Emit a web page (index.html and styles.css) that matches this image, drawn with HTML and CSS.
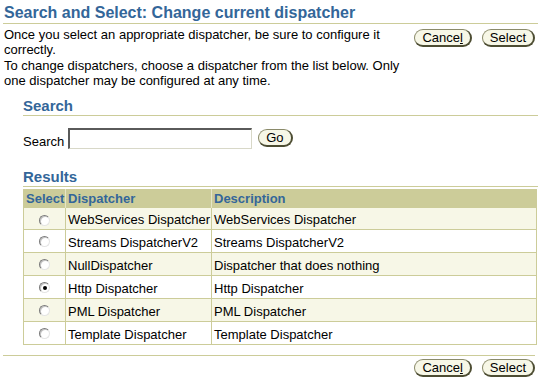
FILE: index.html
```html
<!DOCTYPE html>
<html lang="en">
<head>
<meta charset="utf-8">
<title>Search and Select: Change current dispatcher</title>
<link rel="stylesheet" href="styles.css">
</head>
<body>
<h1 class="page-title">Search and Select: Change current dispatcher</h1>
<div class="intro">
  <p class="intro-text">Once you select an appropriate dispatcher, be sure to configure it correctly.<br>To change dispatchers, choose a dispatcher from the list below. Only one dispatcher may be configured at any time.</p>
  <div class="actions">
    <button class="btn" type="button">Cance<u>l</u></button>
    <button class="btn" type="button">Select</button>
  </div>
</div>
<div class="section">
  <h2 class="section-title">Search</h2>
  <div class="search-row">
    <label class="search-label" for="q">Search</label>
    <input class="search-input" id="q" type="text">
    <button class="btn btn-go" type="button">Go</button>
  </div>
  <h2 class="section-title results-title">Results</h2>
  <table class="results">
    <thead>
      <tr>
        <th class="col-select">Select</th>
        <th class="col-name">Dispatcher</th>
        <th class="col-desc">Description</th>
      </tr>
    </thead>
    <tbody>
      <tr class="odd first"><td class="radio-cell"><span class="radio"></span></td><td>WebServices Dispatcher</td><td>WebServices Dispatcher</td></tr>
      <tr class="even"><td class="radio-cell"><span class="radio"></span></td><td>Streams DispatcherV2</td><td>Streams DispatcherV2</td></tr>
      <tr class="odd"><td class="radio-cell"><span class="radio"></span></td><td>NullDispatcher</td><td>Dispatcher that does nothing</td></tr>
      <tr class="even"><td class="radio-cell"><span class="radio checked"></span></td><td>Http Dispatcher</td><td>Http Dispatcher</td></tr>
      <tr class="odd"><td class="radio-cell"><span class="radio"></span></td><td>PML Dispatcher</td><td>PML Dispatcher</td></tr>
      <tr class="even"><td class="radio-cell"><span class="radio"></span></td><td>Template Dispatcher</td><td>Template Dispatcher</td></tr>
    </tbody>
  </table>
</div>
<div class="footer">
  <button class="btn" type="button">Cance<u>l</u></button>
  <button class="btn" type="button">Select</button>
</div>
</body>
</html>
```
FILE: styles.css
```css
* { box-sizing: border-box; }
html, body { background: #ffffff; }
body {
  margin: 0;
  font-family: "Liberation Sans", Arial, sans-serif;
  font-size: 13px;
  line-height: 15.33px;
  color: #000000;
}
.page-title {
  margin: 0 0 0 3px;
  padding: 3px 0 0 1px;
  font-size: 16px;
  font-weight: bold;
  line-height: 20px;
  color: #336699;
  border-bottom: 1px solid #cccc99;
}
.intro {
  display: flex;
  align-items: flex-start;
  margin: 0 3px 0 4px;
  padding-top: 3px;
}
.intro-text {
  flex: 1;
  margin: 0;
}
.actions {
  display: flex;
  gap: 10px;
  margin-top: 2px;
}
.btn {
  height: 18px;
  padding: 0 7px;
  margin: 0;
  font-family: "Liberation Sans", Arial, sans-serif;
  font-size: 13px;
  line-height: 15px;
  color: #000000;
  background: #f7f7e7;
  border: 1px solid #8a8a6a;
  border-right: 2px solid #4d4d33;
  border-bottom: 2px solid #4d4d33;
  border-radius: 9px;
}
.btn u { text-decoration: underline; }
.section {
  margin-left: 23px;
}
.section-title {
  margin: 9px 0 0;
  font-size: 15px;
  font-weight: bold;
  line-height: 18px;
  color: #336699;
  border-bottom: 1px solid #cccc99;
}
.search-row {
  display: flex;
  align-items: flex-end;
  margin-top: 12px;
}
.search-label {
  margin-right: 4px;
}
.search-input {
  width: 184px;
  height: 21px;
  margin: 0;
  padding: 0 2px;
  font: inherit;
  background: #ffffff;
  border-top: 2px solid #5a5a5a;
  border-left: 2px solid #5a5a5a;
  border-right: 1px solid #d8d8c8;
  border-bottom: 1px solid #d8d8c8;
}
.btn-go {
  margin-left: 6px;
  margin-bottom: 2px;
}
.results-title {
  margin-top: 19px;
}
.results {
  width: 514px;
  margin-top: 2px;
  border-collapse: separate;
  border-spacing: 0;
  table-layout: fixed;
}
.results th {
  height: 19px;
  padding: 2px 2px 1px;
  font-size: 13px;
  font-weight: bold;
  line-height: 16px;
  color: #336699;
  text-align: left;
  white-space: nowrap;
  background: #cccc99;
  border-right: 1px solid #e6e6c8;
}
.results th.col-select { width: 43px; padding-left: 2px; padding-right: 0; border-left: 1px solid #cccc99; }
.results th.col-name { width: 146px; }
.results th.col-desc { border-right: 1px solid #cccc99; }
.results td {
  height: 23px;
  padding: 5px 2px 1px;
  line-height: 16px;
  white-space: nowrap;
  overflow: hidden;
  border-right: 1px solid #cccc99;
  border-bottom: 1px solid #cccc99;
}
.results tr.first td { height: 22px; padding-top: 4px; }
.results tr.odd td { background: #f7f7e7; }
.results tr.even td { background: #ffffff; }
.results td.radio-cell {
  padding: 0;
  vertical-align: middle;
  border-left: 1px solid #cccc99;
}
.radio {
  display: block;
  position: relative;
  width: 11px;
  height: 11px;
  margin: 0 auto;
  border-radius: 50%;
  background: #ffffff;
  border: 1px solid;
  border-color: #7a7a7a #e4e4e4 #e4e4e4 #7a7a7a;
  box-shadow: inset 1px 1px 0 #c4c4c4;
}
.radio.checked::after {
  content: "";
  position: absolute;
  left: 3px;
  top: 3px;
  width: 4px;
  height: 4px;
  border-radius: 50%;
  background: #000000;
}
.footer {
  display: flex;
  justify-content: flex-end;
  gap: 10px;
  margin: 10px 3px 0 3px;
  padding-top: 3px;
  border-top: 1px solid #cccc99;
}
```
